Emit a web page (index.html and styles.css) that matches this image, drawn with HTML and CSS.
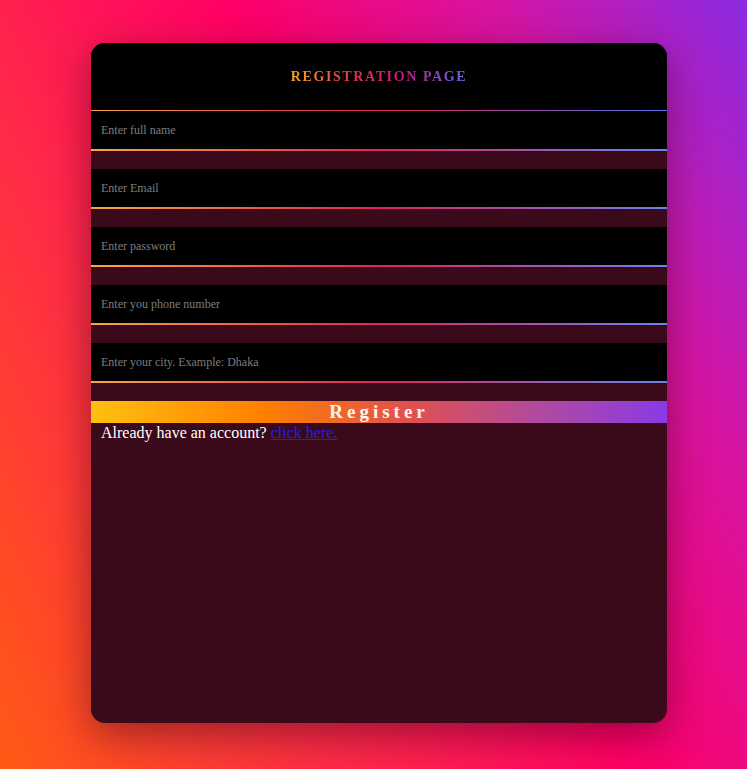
FILE: index.html
```html
<!DOCTYPE html>
<html lang="en">
<head>
<meta charset="utf-8">
<title>Registration Page</title>
<link rel="stylesheet" href="styles.css">
</head>
<body>
  <div class="card">
    <div class="header">
      <h2 class="title">REGISTRATION PAGE</h2>
    </div>
    <form class="form">
      <input class="field" type="text" placeholder="Enter full name">
      <input class="field" type="email" placeholder="Enter Email">
      <input class="field" type="password" placeholder="Enter password">
      <input class="field" type="text" placeholder="Enter you phone number">
      <input class="field" type="text" placeholder="Enter your city. Example: Dhaka">
      <button class="register" type="button">Register</button>
      <p class="already">Already have an account? <a href="#">click here.</a></p>
    </form>
  </div>
</body>
</html>
```
FILE: styles.css
```css
html, body {
  margin: 0;
  padding: 0;
  height: 100%;
}
body {
  background: linear-gradient(62deg, #ff5a14 0%, #ff2a48 30%, #ff0066 55%, #d614a2 78%, #8a2be2 100%);
  font-family: "Liberation Serif", "Times New Roman", serif;
  overflow: hidden;
}
.card {
  box-sizing: border-box;
  margin: 43px 0 0 91px;
  width: 576px;
  height: 680px;
  background: #3a0a1a;
  border-radius: 14px;
  overflow: hidden;
  box-shadow: 0 12px 40px rgba(40, 0, 20, 0.45);
}
.header {
  background: #000;
  height: 67px;
  display: flex;
  align-items: center;
  justify-content: center;
  border-bottom: 1px solid;
  border-image: linear-gradient(to right, #f5a040, #e0245a 50%, #5b72f0) 1;
}
.title {
  margin: 0;
  padding-top: 0;
  font-size: 14px;
  font-weight: bold;
  letter-spacing: 1.6px;
  background: linear-gradient(to right, #f5a623 0%, #e0304a 35%, #c01a80 65%, #5b6cf0 100%);
  -webkit-background-clip: text;
  background-clip: text;
  color: transparent;
}
.form {
  display: flex;
  flex-direction: column;
  margin: 0;
}
.field {
  box-sizing: border-box;
  display: block;
  width: 100%;
  height: 40px;
  margin: 0 0 18px;
  padding: 0 10px;
  background: #000;
  border: none;
  border-bottom: 2px solid;
  border-image: linear-gradient(to right, #f7a840, #e0245a 50%, #6a82f2) 1;
  color: #ddd;
  font-family: "Liberation Serif", "Times New Roman", serif;
  font-size: 12px;
  outline: none;
}
.field::placeholder {
  color: #7d7d7d;
}
.register {
  display: block;
  width: 100%;
  height: 22px;
  margin: 0;
  padding: 0;
  border: none;
  background: linear-gradient(to right, #ffc010 0%, #ff8000 30%, #e05050 55%, #b04aa0 78%, #8a3ae6 100%);
  color: #fff6ea;
  font-family: "Liberation Serif", "Times New Roman", serif;
  font-size: 19px;
  font-weight: bold;
  letter-spacing: 4px;
  line-height: 22px;
}
.already {
  margin: 0;
  padding: 0 10px;
  color: #fff;
  font-size: 16px;
  line-height: 20px;
}
.already a {
  color: #2a1ae6;
}
```
